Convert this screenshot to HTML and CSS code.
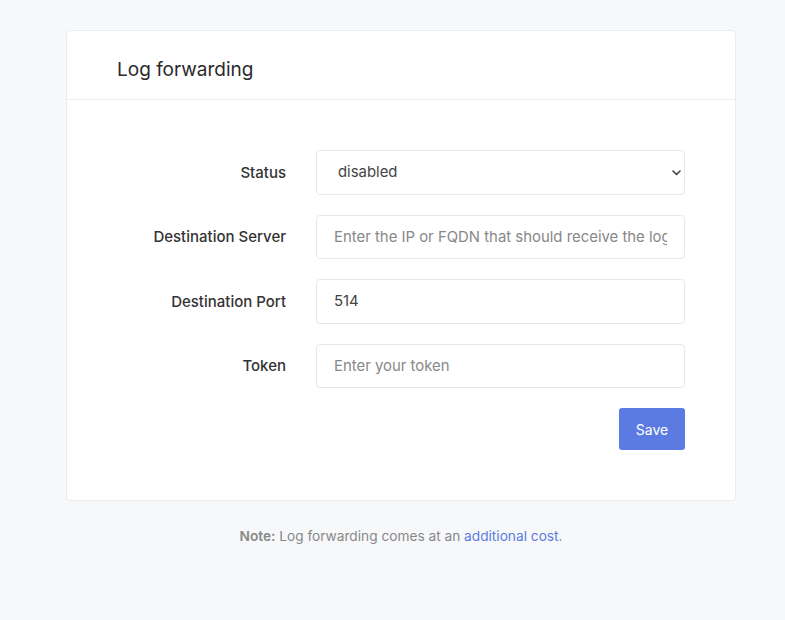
FILE: index.html
```html
<!DOCTYPE html>
<html>
<head>
<meta charset="utf-8">
<link rel="stylesheet" href="styles.css">
</head>
<body>
<main class="page">
  <section class="card">
    <header class="card-header">
      <h1 class="card-title">Log forwarding</h1>
    </header>
    <form class="card-body">
      <div class="row">
        <label class="label" for="status">Status</label>
        <div class="field select-wrap">
          <select id="status" class="control select">
            <option>disabled</option>
            <option>enabled</option>
          </select>
          <svg class="chevron" width="9" height="6" viewBox="0 0 9 6"><path d="M1 1l3.5 3.5L8 1" fill="none" stroke="#444" stroke-width="1.6" stroke-linecap="round" stroke-linejoin="round"/></svg>
        </div>
      </div>
      <div class="row">
        <label class="label" for="server">Destination Server</label>
        <div class="field"><input id="server" class="control" type="text" placeholder="Enter the IP or FQDN that should receive the logs"></div>
      </div>
      <div class="row">
        <label class="label" for="port">Destination Port</label>
        <div class="field"><input id="port" class="control" type="text" value="514"></div>
      </div>
      <div class="row">
        <label class="label" for="token">Token</label>
        <div class="field"><input id="token" class="control" type="text" placeholder="Enter your token"></div>
      </div>
      <div class="actions">
        <button type="button" class="btn">Save</button>
      </div>
    </form>
  </section>
  <p class="note"><strong>Note:</strong> Log forwarding comes at an <a href="#">additional cost</a>.</p>
</main>
</body>
</html>
```
FILE: styles.css
```css
html, body {
  margin: 0;
  padding: 0;
  background: #f7f8fa;
  font-family: Inter, "Liberation Sans", sans-serif;
  color: #333;
}
.page {
  padding: 30px 0 0 66px;
  width: 670px;
}
.card {
  background: #fff;
  border: 1px solid #eaecef;
  border-radius: 4px;
}
.card-header {
  height: 68px;
  display: flex;
  align-items: center;
  padding: 0 50px;
  border-bottom: 1px solid #eaecef;
}
.card-title {
  margin: 0;
  font-size: 19px;
  font-weight: 400;
  color: #2a2a2a;
  padding-top: 9px;
}
.card-body {
  padding: 50px 50px 50px;
  display: flex;
  flex-direction: column;
  gap: 20px;
}
.row {
  display: flex;
  align-items: center;
  gap: 30px;
  height: 44.5px;
}
.label {
  width: 169px;
  text-align: right;
  font-size: 15px;
  font-weight: 450;
  color: #333;
}
.field {
  flex: 1;
  position: relative;
}
.control {
  box-sizing: border-box;
  width: 100%;
  height: 44.5px;
  border: 1px solid #e6e8eb;
  border-radius: 4px;
  padding: 0 17px;
  font-family: Inter, "Liberation Sans", sans-serif;
  font-size: 14.9px;
  color: #444;
  background: #fff;
  outline: none;
}
.control::placeholder {
  color: #888;
}
.select {
  appearance: none;
  -webkit-appearance: none;
  padding-left: 21px;
}
.chevron {
  position: absolute;
  right: 4px;
  top: 20px;
  pointer-events: none;
}
.actions {
  display: flex;
  justify-content: flex-end;
}
.btn {
  width: 66px;
  height: 42px;
  border: none;
  border-radius: 3px;
  background: #5b7be3;
  color: #fff;
  font-family: Inter, "Liberation Sans", sans-serif;
  font-size: 14px;
  cursor: pointer;
}
.note {
  margin: 27px 0 0;
  text-align: center;
  font-size: 13.7px;
  color: #888;
}
.note strong {
  font-weight: 600;
  color: #888;
}
.note a {
  color: #5b7be3;
  text-decoration: none;
}
```
